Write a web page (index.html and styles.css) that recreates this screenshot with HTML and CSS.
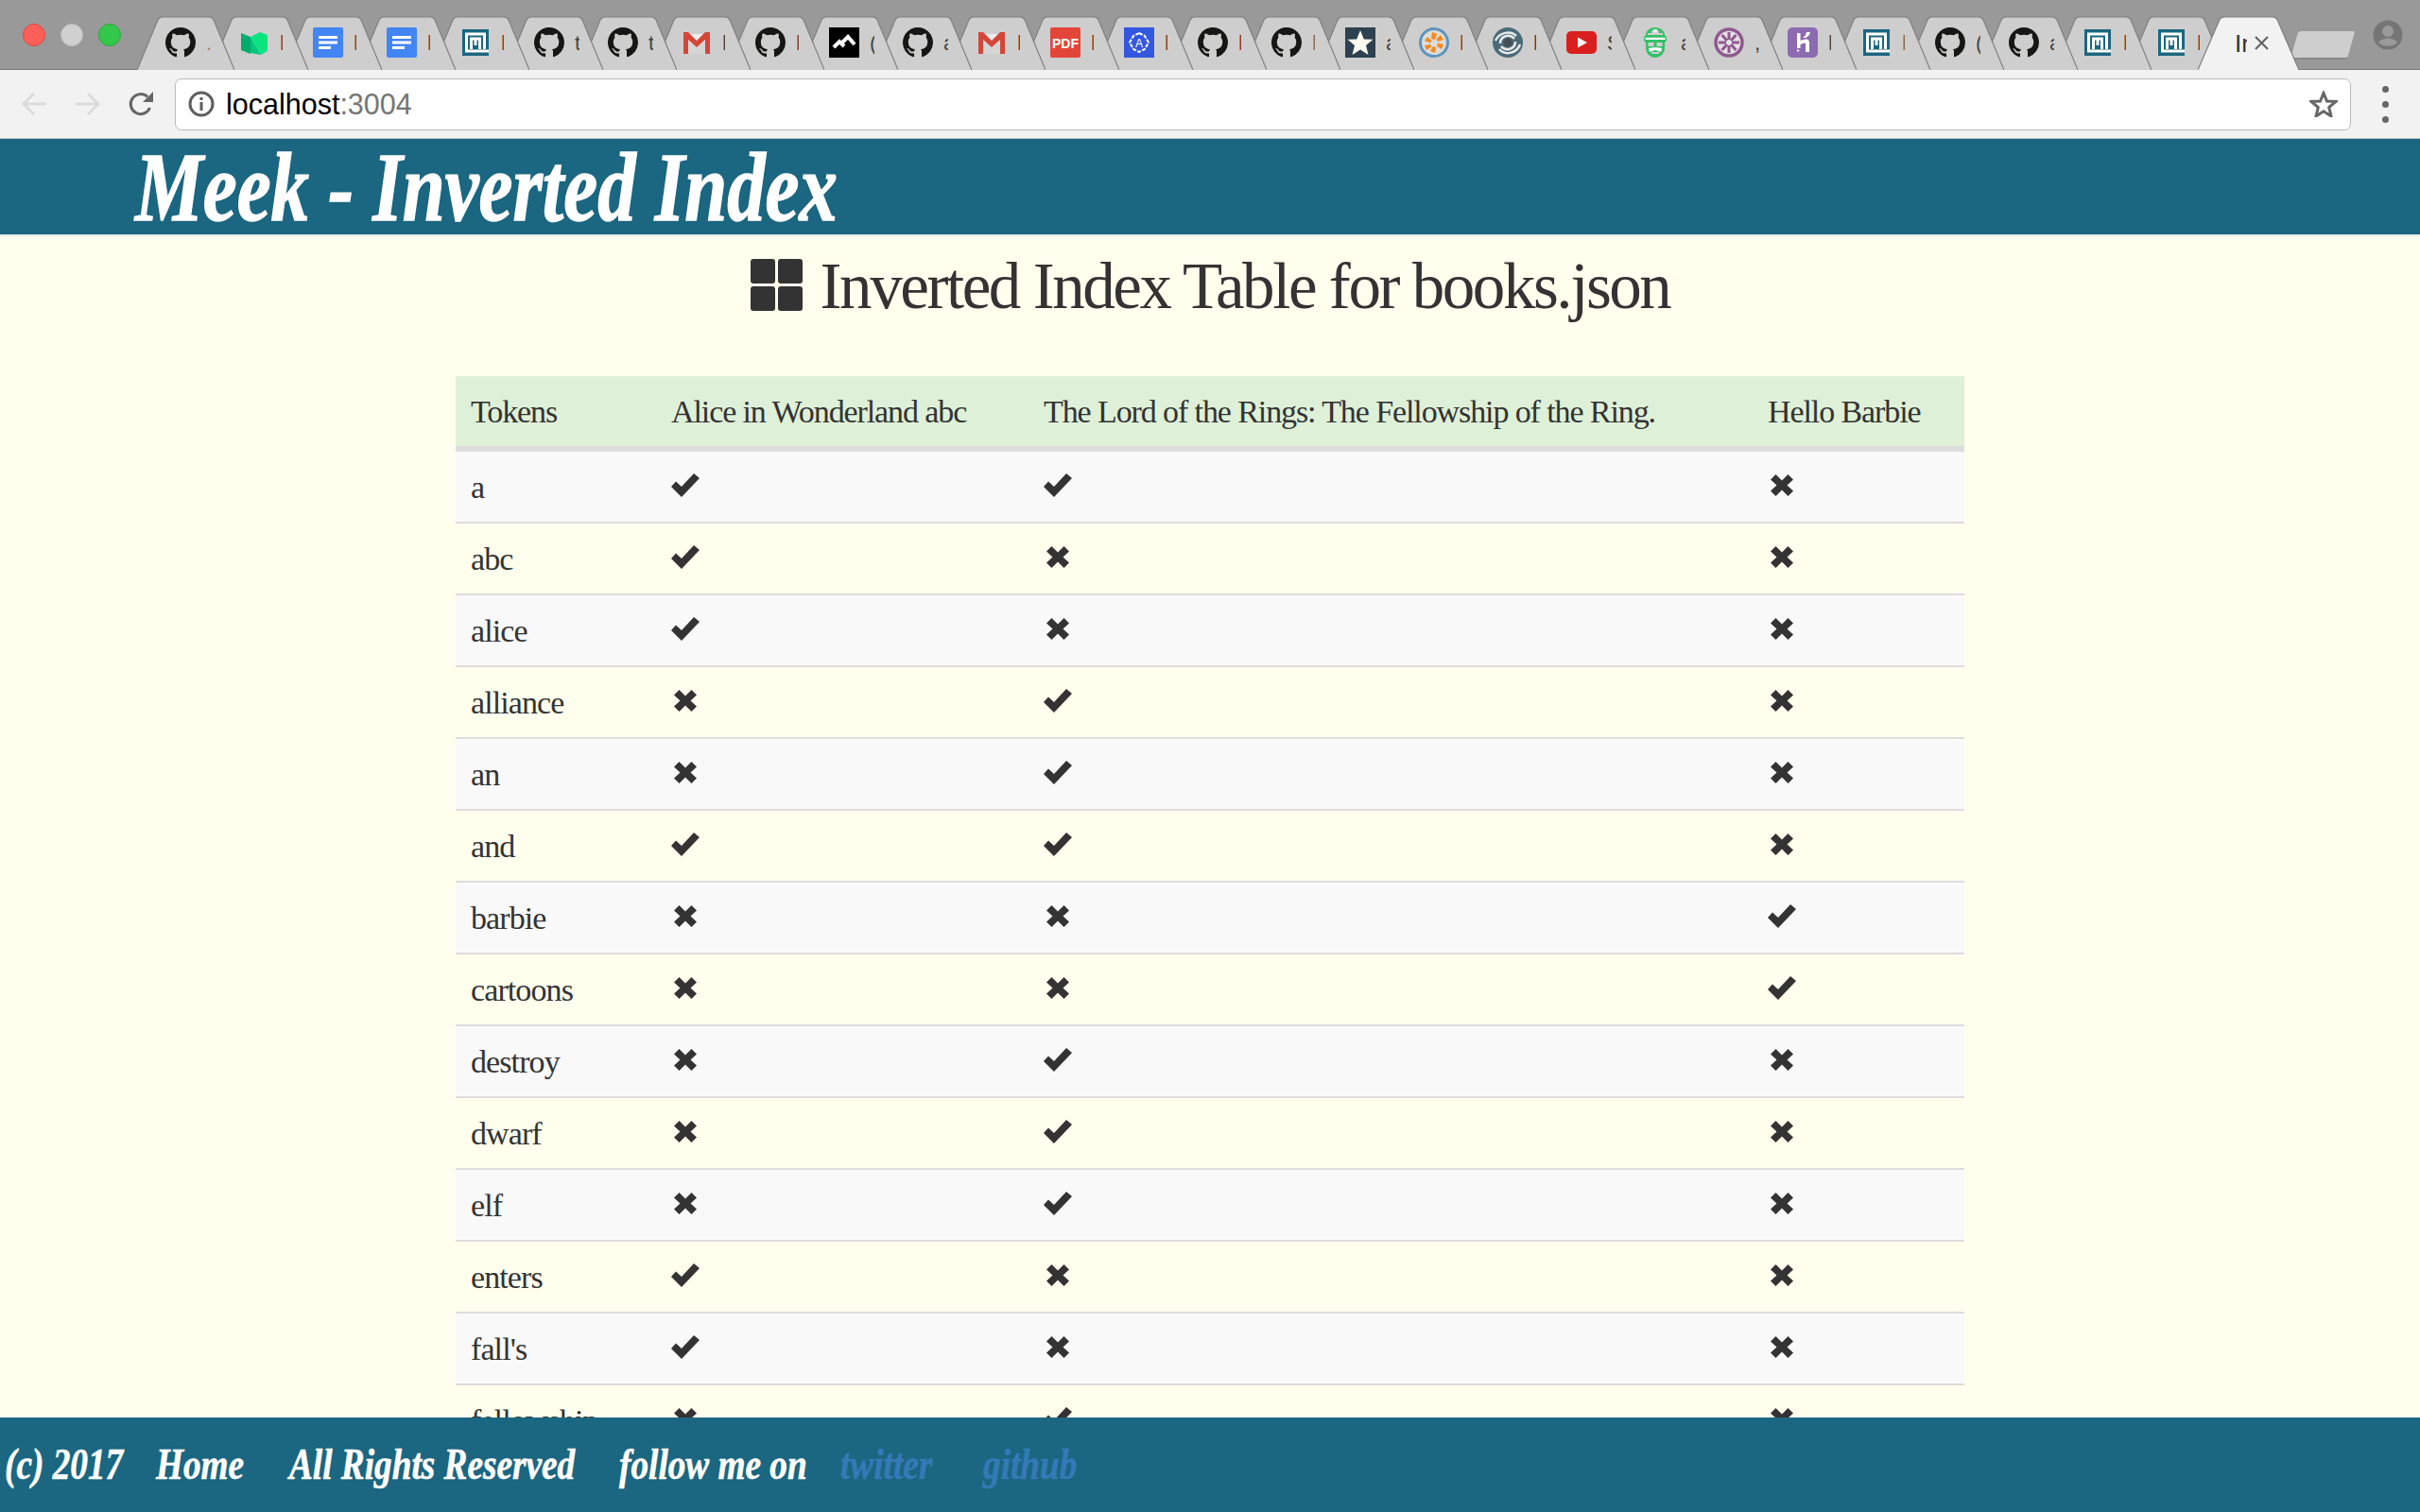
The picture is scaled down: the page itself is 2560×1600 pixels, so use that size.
FILE: index.html
```html
<!DOCTYPE html>
<html lang="en">
<head>
<meta charset="utf-8">
<title>Meek - Inverted Index</title>
<link rel="stylesheet" href="styles.css">
</head>
<body>
<svg class="sprite" aria-hidden="true">
  <symbol id="tabshape" viewBox="0 0 103 57" preserveAspectRatio="none"><path d="M0 57 L22 4 Q23.500 1 27 1 L76 1 Q79.500 1 81 4 L103 57" fill="currentColor" stroke="#808080" stroke-width="1.200"/></symbol>
  <symbol id="gh" viewBox="0 0 16 16"><path fill="#161614" d="M8 0C3.580 0 0 3.580 0 8c0 3.540 2.290 6.530 5.470 7.590.400.070.550-.170.550-.380 0-.190-.010-.820-.010-1.490-2.010.370-2.530-.490-2.690-.940-.090-.230-.480-.940-.820-1.130-.280-.150-.680-.520-.010-.530.630-.010 1.080.580 1.230.820.720 1.210 1.870.870 2.330.660.070-.520.280-.870.510-1.070-1.780-.200-3.640-.890-3.640-3.950 0-.870.310-1.590.820-2.150-.080-.200-.360-1.020.080-2.120 0 0 .670-.210 2.200.820.640-.180 1.320-.270 2-.270.680 0 1.360.090 2 .270 1.530-1.040 2.200-.820 2.200-.820.440 1.100.160 1.920.080 2.120.510.560.820 1.270.820 2.150 0 3.070-1.870 3.750-3.650 3.950.290.250.540.730.540 1.480 0 1.070-.010 1.930-.010 2.200 0 .210.150.460.550.380A8.013 8.013 0 0016 8c0-4.420-3.580-8-8-8z"/></symbol>
  <symbol id="medium" viewBox="0 0 32 32"><path fill="#00ab6c" d="M2 6 L12 10 L12 28 L2 24Z"/><path fill="#00c77d" d="M12 10 L23 29 L12 27Z"/><path fill="#0be57f" d="M12 10 L22 5 L30 8 L30 25 L23 29Z"/></symbol>
  <symbol id="docs" viewBox="0 0 32 32"><rect width="32" height="32" rx="2" fill="#4285f4"/><path fill="#fff" d="M6 9h20v3H6zM6 14.500h20v3H6zM6 20h13v3H6z"/></symbol>
  <symbol id="meek" viewBox="0 0 32 32"><rect x="2" y="2" width="28" height="28" fill="#1b6680"/><path fill="none" stroke="#fff" stroke-width="3" d="M30 25 H6.500 V7 H25.500 V23 M11.500 23 V12 H20.500 V23 M16 12 V19"/></symbol>
  <symbol id="gmail" viewBox="0 0 32 32"><path fill="#ececec" d="M3 7H29V28H3Z"/><path fill="#d5d5d5" d="M7 28 L7 14 L16 20 L25 14 L25 28Z"/><path fill="#d44638" d="M2 5 L7 5 L16 14 L25 5 L30 5 L30 28 L25 28 L25 13 L16 21 L7 13 L7 28 L2 28Z"/></symbol>
  <symbol id="mountain" viewBox="0 0 32 32"><rect width="32" height="32"/><path fill="none" stroke="#fff" stroke-width="4" d="M5 21 L11 15 L16 20 M14 16 L20 10 L27 18"/></symbol>
  <symbol id="pdf" viewBox="0 0 32 32"><rect width="32" height="32" rx="2" fill="#e34638"/><text class="pdft" x="16" y="21.500" text-anchor="middle">PDF</text></symbol>
  <symbol id="ng" viewBox="0 0 32 32"><rect width="32" height="32" fill="#3457e0"/><path fill="none" stroke="#fff" stroke-width="2" stroke-dasharray="4 1.500" d="M16 6 L22 9 L26 16 L22 23 L16 26 L10 23 L6 16 L10 9Z"/><text class="ngt" x="16" y="21" text-anchor="middle">A</text></symbol>
  <symbol id="star" viewBox="0 0 32 32"><rect width="32" height="32" fill="#2d4150"/><path fill="#fdfcf0" d="M16 3 L19.800 12.500 L29.500 12.800 L22 19 L24.500 29 L16 23.500 L7.500 29 L10 19 L2.500 12.800 L12.200 12.500Z"/></symbol>
  <symbol id="wheel" viewBox="0 0 32 32"><circle cx="16" cy="16" r="14.500" fill="#dcdcd8" stroke="#5f93bd" stroke-width="3"/><g fill="#f28a23"><path d="M14 5 L19 7 L17 13 L13 12Z"/><path d="M23 8 L26 13 L20 15 L18.500 12Z"/><path d="M26 18 L24 23 L19 20 L20 16.500Z"/><path d="M17 27 L12 25 L15 20 L18 21Z"/><path d="M8 24 L6 19 L12 18 L13.500 20.500Z"/><path d="M6 14 L9 10 L13.500 14 L12 16.500Z"/></g></symbol>
  <symbol id="swirl" viewBox="0 0 32 32"><circle cx="16" cy="16" r="16" fill="#4b6a77"/><path fill="none" stroke="#e8ebeb" stroke-width="2.500" d="M3 14 C7 5 19 3 25 9 M29 18 C25 28 13 30 7 23 M8 17 C8 9 18 6 23 12 M24 15 C24 23 14 26 9 20"/><circle cx="16" cy="16" r="4.500" fill="#454f55"/></symbol>
  <symbol id="yt" viewBox="0 0 32 32"><rect y="4" width="32" height="24" rx="5" fill="#d9201f"/><path fill="#fff" d="M12 10.500 L22 16 L12 21.500Z"/></symbol>
  <symbol id="face" viewBox="0 0 32 32"><path fill="#35c069" d="M16 0 C22 0 26 4 26 8 L28 10 L28 14 L26 16 L26 23 C25 29 20 32 16 32 C12 32 7 29 6 23 L6 16 L4 14 L4 10 L6 8 C6 4 10 0 16 0Z"/><path fill="#d0d0d0" d="M8 6 H12 V3.500 H20 V6 H24 V8 H8Z M8.500 16 H14.500 V20 H8.500Z M17.500 16 H23.500 V20 H17.500Z M12 26 H20 V28 H12Z"/><path fill="#fff" d="M14 2 H18 V5 H14Z M5.500 10.800 H26.500 V13 H5.500Z M9 22 C12 21 20 21 23 22 L22 26 L16 24 L10 26Z"/></symbol>
  <symbol id="jwheel" viewBox="0 0 32 32"><circle cx="16" cy="16" r="14" fill="#e6dfe6" stroke="#8e5a8e" stroke-width="3.500"/><g fill="none" stroke="#8e5a8e" stroke-width="3"><path d="M16 5 V13 M23.500 8 L18 14 M27 16 H19 M23.500 24 L18 18 M16 27 V19 M8.500 24 L14 18 M5 16 H13 M8.500 8 L14 14"/></g></symbol>
  <symbol id="heroku" viewBox="0 0 32 32"><rect width="32" height="32" rx="5" fill="#8d6bb0"/><path fill="#fff" d="M10 6 H13.500 V14 C16 13 19 12.500 20 12.500 C21.500 12.500 23 14 23 16 V26 H19 V17 C19 16.500 18.500 16.500 18 16.500 L13.500 18 V22 H10Z M10 26 V23 L13 24.500Z M20 5 H24 C23 8 22 10 19 11 H16 C18 10 19.500 8 20 5Z"/></symbol>
  <symbol id="ok" viewBox="0 0 30 25"><path d="M0 14 L5 8.500 L11 14 L24 0 L30 5 L11 25Z"/></symbol>
  <symbol id="no" viewBox="0 0 24 23"><path d="M0 5.500 L5.500 0 L12 6.500 L18.500 0 L24 5.500 L17.500 11.500 L24 17.500 L18.500 23 L12 16.500 L5.500 23 L0 17.500 L6.500 11.500Z"/></symbol>
</svg>

<div class="page">
  <div class="tabstrip">
    <div class="lights"><i class="light red"></i><i class="light grey"></i><i class="light green"></i></div>
    <div class="tabs">
      <div class="tab active"><svg class="tabbg"><use href="#tabshape"/></svg><span class="atitle">In</span><svg class="close" viewBox="0 0 15 15"><path d="M1 1 L14 14 M14 1 L1 14"/></svg></div>
      <div class="tab"><svg class="tabbg"><use href="#tabshape"/></svg><svg class="favi"><use href="#meek"/></svg><span class="ti sl">l</span></div>
      <div class="tab"><svg class="tabbg"><use href="#tabshape"/></svg><svg class="favi"><use href="#meek"/></svg><span class="ti sl">l</span></div>
      <div class="tab"><svg class="tabbg"><use href="#tabshape"/></svg><svg class="favi"><use href="#gh"/></svg><span class="ti">a</span></div>
      <div class="tab"><svg class="tabbg"><use href="#tabshape"/></svg><svg class="favi"><use href="#gh"/></svg><span class="ti">(</span></div>
      <div class="tab"><svg class="tabbg"><use href="#tabshape"/></svg><svg class="favi"><use href="#meek"/></svg><span class="ti sl grayish">l</span></div>
      <div class="tab"><svg class="tabbg"><use href="#tabshape"/></svg><svg class="favi"><use href="#heroku"/></svg><span class="ti sl dark">l</span></div>
      <div class="tab"><svg class="tabbg"><use href="#tabshape"/></svg><svg class="favi"><use href="#jwheel"/></svg><span class="ti">,</span></div>
      <div class="tab"><svg class="tabbg"><use href="#tabshape"/></svg><svg class="favi"><use href="#face"/></svg><span class="ti">a</span></div>
      <div class="tab"><svg class="tabbg"><use href="#tabshape"/></svg><svg class="favi"><use href="#yt"/></svg><span class="ti">S</span></div>
      <div class="tab"><svg class="tabbg"><use href="#tabshape"/></svg><svg class="favi"><use href="#swirl"/></svg><span class="ti sl dark">l</span></div>
      <div class="tab"><svg class="tabbg"><use href="#tabshape"/></svg><svg class="favi"><use href="#wheel"/></svg><span class="ti sl">l</span></div>
      <div class="tab"><svg class="tabbg"><use href="#tabshape"/></svg><svg class="favi"><use href="#star"/></svg><span class="ti">a</span></div>
      <div class="tab"><svg class="tabbg"><use href="#tabshape"/></svg><svg class="favi"><use href="#gh"/></svg><span class="ti sl grayish">l</span></div>
      <div class="tab"><svg class="tabbg"><use href="#tabshape"/></svg><svg class="favi"><use href="#gh"/></svg><span class="ti sl">l</span></div>
      <div class="tab"><svg class="tabbg"><use href="#tabshape"/></svg><svg class="favi"><use href="#ng"/></svg><span class="ti sl">l</span></div>
      <div class="tab"><svg class="tabbg"><use href="#tabshape"/></svg><svg class="favi"><use href="#pdf"/></svg><span class="ti sl">l</span></div>
      <div class="tab"><svg class="tabbg"><use href="#tabshape"/></svg><svg class="favi"><use href="#gmail"/></svg><span class="ti sl">l</span></div>
      <div class="tab"><svg class="tabbg"><use href="#tabshape"/></svg><svg class="favi"><use href="#gh"/></svg><span class="ti">a</span></div>
      <div class="tab"><svg class="tabbg"><use href="#tabshape"/></svg><svg class="favi"><use href="#mountain"/></svg><span class="ti">(</span></div>
      <div class="tab"><svg class="tabbg"><use href="#tabshape"/></svg><svg class="favi"><use href="#gh"/></svg><span class="ti sl">l</span></div>
      <div class="tab"><svg class="tabbg"><use href="#tabshape"/></svg><svg class="favi"><use href="#gmail"/></svg><span class="ti sl dark">l</span></div>
      <div class="tab"><svg class="tabbg"><use href="#tabshape"/></svg><svg class="favi"><use href="#gh"/></svg><span class="ti">t</span></div>
      <div class="tab"><svg class="tabbg"><use href="#tabshape"/></svg><svg class="favi"><use href="#gh"/></svg><span class="ti">t</span></div>
      <div class="tab"><svg class="tabbg"><use href="#tabshape"/></svg><svg class="favi"><use href="#meek"/></svg><span class="ti sl">l</span></div>
      <div class="tab"><svg class="tabbg"><use href="#tabshape"/></svg><svg class="favi"><use href="#docs"/></svg><span class="ti sl">l</span></div>
      <div class="tab"><svg class="tabbg"><use href="#tabshape"/></svg><svg class="favi"><use href="#docs"/></svg><span class="ti sl">l</span></div>
      <div class="tab"><svg class="tabbg"><use href="#tabshape"/></svg><svg class="favi"><use href="#medium"/></svg><span class="ti sl">l</span></div>
      <div class="tab"><svg class="tabbg"><use href="#tabshape"/></svg><svg class="favi"><use href="#gh"/></svg><span class="ti faint">.</span></div>
    </div>
    <div class="newtab"></div>
    <svg class="profile" viewBox="0 0 32 32"><ellipse cx="16" cy="16" rx="15.500" ry="15.500" fill="#757575"/><circle cx="16" cy="12" r="6" fill="#9a9a9a"/><path d="M6 24 C9 18 23 18 26 24 C22 29 10 29 6 24Z" fill="#9a9a9a"/></svg>
  </div>

  <div class="toolbar">
    <svg class="tool" viewBox="0 0 28 26"><path class="nav" d="M27 13 H3 M14 2 L3 13 L14 24"/></svg>
    <svg class="tool fwd" viewBox="0 0 28 26"><path class="nav" d="M1 13 H25 M14 2 L25 13 L14 24"/></svg>
    <svg class="tool reload" viewBox="0 0 28 28"><path class="re" d="M23.500 18 A10.500 10.500 0 1 1 21 6.500"/><path class="retip" d="M27 1 V12 H16Z"/></svg>
    <div class="omnibox">
      <svg class="info" viewBox="0 0 28 28"><circle cx="14" cy="14" r="12" fill="none" stroke="#5f5f5f" stroke-width="3"/><path fill="#5f5f5f" d="M12.500 7h3v3h-3zM12.500 12h3v9h-3z"/></svg>
      <span class="url">localhost<span class="port">:3004</span></span>
      <svg class="star" viewBox="0 0 30 28"><path d="M15 2.500 L18.500 11 L28 11.500 L20.700 17.500 L23 27 L15 21.800 L7 27 L9.300 17.500 L2 11.500 L11.500 11Z"/></svg>
    </div>
    <div class="kebab"><i></i><i></i><i></i></div>
  </div>

  <header class="appbar"><h1 class="brand">Meek - Inverted Index</h1></header>

  <main class="content">
    <h2 class="title"><span class="grid4"><i></i><i></i><i></i><i></i></span>Inverted Index Table for books.json</h2>
    <table class="index">
      <thead>
        <tr><th class="c1">Tokens</th><th class="c2">Alice in Wonderland abc</th><th class="c3">The Lord of the Rings: The Fellowship of the Ring.</th><th class="c4">Hello Barbie</th></tr>
      </thead>
      <tbody>
        <tr><td>a</td><td><svg class="ok"><use href="#ok"/></svg></td><td><svg class="ok"><use href="#ok"/></svg></td><td><svg class="no"><use href="#no"/></svg></td></tr>
        <tr><td>abc</td><td><svg class="ok"><use href="#ok"/></svg></td><td><svg class="no"><use href="#no"/></svg></td><td><svg class="no"><use href="#no"/></svg></td></tr>
        <tr><td>alice</td><td><svg class="ok"><use href="#ok"/></svg></td><td><svg class="no"><use href="#no"/></svg></td><td><svg class="no"><use href="#no"/></svg></td></tr>
        <tr><td>alliance</td><td><svg class="no"><use href="#no"/></svg></td><td><svg class="ok"><use href="#ok"/></svg></td><td><svg class="no"><use href="#no"/></svg></td></tr>
        <tr><td>an</td><td><svg class="no"><use href="#no"/></svg></td><td><svg class="ok"><use href="#ok"/></svg></td><td><svg class="no"><use href="#no"/></svg></td></tr>
        <tr><td>and</td><td><svg class="ok"><use href="#ok"/></svg></td><td><svg class="ok"><use href="#ok"/></svg></td><td><svg class="no"><use href="#no"/></svg></td></tr>
        <tr><td>barbie</td><td><svg class="no"><use href="#no"/></svg></td><td><svg class="no"><use href="#no"/></svg></td><td><svg class="ok"><use href="#ok"/></svg></td></tr>
        <tr><td>cartoons</td><td><svg class="no"><use href="#no"/></svg></td><td><svg class="no"><use href="#no"/></svg></td><td><svg class="ok"><use href="#ok"/></svg></td></tr>
        <tr><td>destroy</td><td><svg class="no"><use href="#no"/></svg></td><td><svg class="ok"><use href="#ok"/></svg></td><td><svg class="no"><use href="#no"/></svg></td></tr>
        <tr><td>dwarf</td><td><svg class="no"><use href="#no"/></svg></td><td><svg class="ok"><use href="#ok"/></svg></td><td><svg class="no"><use href="#no"/></svg></td></tr>
        <tr><td>elf</td><td><svg class="no"><use href="#no"/></svg></td><td><svg class="ok"><use href="#ok"/></svg></td><td><svg class="no"><use href="#no"/></svg></td></tr>
        <tr><td>enters</td><td><svg class="ok"><use href="#ok"/></svg></td><td><svg class="no"><use href="#no"/></svg></td><td><svg class="no"><use href="#no"/></svg></td></tr>
        <tr><td>fall's</td><td><svg class="ok"><use href="#ok"/></svg></td><td><svg class="no"><use href="#no"/></svg></td><td><svg class="no"><use href="#no"/></svg></td></tr>
        <tr><td>fellowship</td><td><svg class="no"><use href="#no"/></svg></td><td><svg class="ok"><use href="#ok"/></svg></td><td><svg class="no"><use href="#no"/></svg></td></tr>
      </tbody>
    </table>
  </main>

  <footer class="foot">
    <span class="f-item f-copy">(c) 2017</span>
    <a class="f-item f-home">Home</a>
    <span class="f-item f-rights">All Rights Reserved</span>
    <span class="f-item f-follow">follow me on</span>
    <a class="f-item f-link f-tw">twitter</a>
    <a class="f-item f-link">github</a>
  </footer>
</div>
</body>
</html>
```
FILE: styles.css
```css
* { box-sizing: border-box; }
html, body { margin: 0; height: 100%; }
body { font-family: "Liberation Serif", serif; color: #333; background: #ffffee; overflow: hidden; }
.sprite { position: absolute; width: 0; height: 0; }

.page { display: flex; flex-direction: column; height: 100vh; }

/* browser tab strip */
.tabstrip { display: flex; align-items: flex-end; height: 74px; flex: none; background: #999; border-bottom: 1px solid #777; }
.lights { display: flex; gap: 16px; width: 145px; flex: none; padding-left: 24px; align-self: flex-start; margin-top: 25px; }
.light { width: 24px; height: 24px; border-radius: 50%; }
.red { background: #fc5f58; border: 1px solid #df4744; }
.grey { background: #d0d0d0; border: 1px solid #bdbdbd; }
.green { background: #34c84a; border: 1px solid #2aa83b; }
.tabs { display: flex; flex-direction: row-reverse; flex: none; margin-bottom: -1px; }
.tab { position: relative; display: flex; align-items: center; width: 103px; height: 57px; padding-left: 30px; color: #cecece; flex: none; margin-right: -25px; }
.tab.active { width: 107px; margin-right: 0; margin-left: -4px; color: #f2f2f2; z-index: 1; padding-left: 39px; }
.tabbg { position: absolute; left: 0; top: 0; width: 100%; height: 100%; }
.favi { position: relative; width: 32px; height: 32px; margin-top: -1px; flex: none; }
.ti { position: relative; width: 5px; height: 26px; margin-left: 11px; overflow: hidden; font: 22px/26px "Liberation Sans", sans-serif; color: #444; }
.ti.sl { width: 2px; font-size: 22px; margin-left: 12px; color: #8c4032; font-weight: 700; text-indent: -1px; }
.ti.sl.dark { color: #50483c; }
.ti.sl.grayish { color: #8a6a50; }
.ti.faint { color: #a58a60; }
.atitle { position: relative; width: 13px; overflow: hidden; font: 26px/30px "Liberation Sans", sans-serif; color: #333; }
.close { position: relative; width: 15px; height: 15px; margin-left: 8px; fill: none; stroke: #5f5f5f; stroke-width: 2; }
.newtab { width: 60px; height: 30px; margin: 0 0 10px -5px; background: #cecece; transform: skewX(-16deg); border-radius: 3px; border-bottom: 2px solid #888; flex: none; }
.profile { width: 32px; height: 32px; margin: 0 18px 20px auto; flex: none; }

/* browser toolbar */
.toolbar { display: flex; align-items: center; height: 73px; flex: none; background: #f2f2f2; border-bottom: 1px solid #bcc; padding-left: 22px; }
.tool { width: 28px; height: 26px; flex: none; }
.fwd { margin-left: 29px; }
.reload { width: 28px; height: 28px; margin-left: 28px; }
.nav { fill: none; stroke: #dcdcdc; stroke-width: 3; }
.re { fill: none; stroke: #666; stroke-width: 3; }
.retip { fill: #666; }
.omnibox { display: flex; align-items: center; width: 2302px; height: 55px; margin-left: 22px; background: #fff; border: 1.500px solid #bbb; border-radius: 7px; padding: 0 13px 0 13px; flex: none; }
.info { width: 28px; height: 28px; flex: none; }
.url { margin-left: 12px; font: 30.500px/1 "Liberation Sans", sans-serif; color: #000; }
.port { color: #757575; }
.star { width: 30px; height: 28px; margin-left: auto; fill: none; stroke: #666; stroke-width: 3; }
.kebab { display: flex; flex-direction: column; gap: 9px; margin-left: 33px; }
.kebab i { width: 7px; height: 7px; border-radius: 50%; background: #666; }

/* app header */
.appbar { flex: none; height: 103px; background: #1b6680; border-bottom: 2px solid #e6ece6; padding-left: 143px; }
.brand { margin: 0; font: italic 700 104px/102px "Liberation Serif", serif; color: #fff; -webkit-text-stroke: 1.500px #fff; transform: scaleX(.777); transform-origin: left center; white-space: nowrap; }

/* main content */
.content { flex: 1; min-height: 0; overflow: hidden; }
.title { display: flex; align-items: center; justify-content: center; margin: 0; height: 148px; padding: 4px 0 46px; font-weight: 400; font-size: 69px; letter-spacing: -2.450px; color: #333; }
.grid4 { display: grid; grid-template-columns: 26px 26px; grid-auto-rows: 26px; gap: 3px; margin-right: 19px; margin-top: -4px; }
.grid4 i { background: #333; border-radius: 3px; }
.index { width: 1596px; margin: 0 auto; border-collapse: separate; border-spacing: 0; table-layout: fixed; font-size: 34px; letter-spacing: -.900px; color: #333; }
.c1 { width: 212px; }
.c2 { width: 394px; }
.c3 { width: 766px; }
.c4 { width: 224px; }
.index th { height: 80px; padding: 1px 16px 0; text-align: left; font-weight: 400; letter-spacing: -1.100px; background: #dff0d8; border-bottom: 6px solid #ddd; }
.index td { height: 76px; padding: 0 16px; border-bottom: 2px solid #ddd; vertical-align: middle; }
.index td:first-child { padding-top: 1px; }
.index tbody tr:nth-child(odd) td { background: #f9f9f9; }
.ok { width: 30px; height: 25px; fill: #333; display: block; margin-bottom: 3px; }
.no { width: 24px; height: 23px; fill: #333; display: block; margin: 0 0 3px 3px; }

/* footer */
.foot { display: flex; align-items: center; flex: none; height: 100px; background: #1b6680; padding-left: 5px; color: #fff; font: italic 700 46px/1 "Liberation Serif", serif; -webkit-text-stroke: .600px; white-space: nowrap; }
.f-item { transform: scaleX(.81); transform-origin: left center; }
.f-copy { width: 160px; }
.f-home { width: 141px; }
.f-rights { width: 349px; }
.f-follow { width: 234px; }
.f-tw { width: 151px; }
.f-link { color: #337ab7; }
.pdft { font: 700 14px "Liberation Sans", sans-serif; fill: #fff; }
.ngt { font: 400 12px "Liberation Sans", sans-serif; fill: #fff; }
```
